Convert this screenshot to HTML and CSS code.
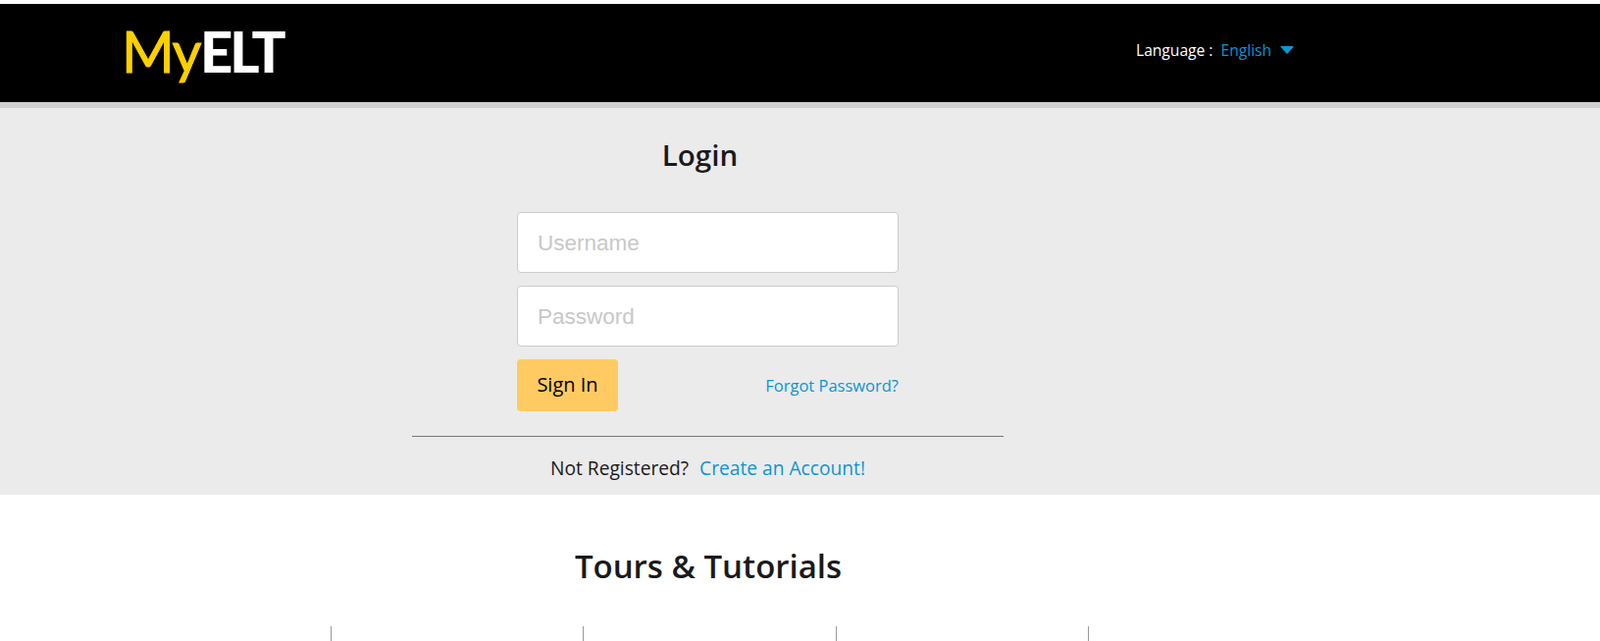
FILE: index.html
```html
<!DOCTYPE html>
<html>
    <head>
        <meta http-equiv="Content-Type" content="text/html; charset=utf-8" />
        <title>MyELT Login</title>
        <link rel="stylesheet" href="styles.css">
    </head>
    <body>
        <div class="header">
            <div class="logo"><span class="logo-my">My</span><span class="logo-elt">ELT</span></div>
            <div class="language">
                <span class="language-label">Language :</span>
                <a class="link" href="#">English</a>
                <svg class="caret" width="14" height="8" viewBox="0 0 14 8"><path d="M1 0H13Q14.2 0 13.4 1L7.6 7.4Q7 8 6.4 7.4L.6 1Q-.2 0 1 0Z" fill="#0b96d0"/></svg>
            </div>
        </div>
        <div class="login">
            <div class="login-box">
                <h1 class="login-title">Login</h1>
                <form class="login-form">
                    <input class="field" type="text" placeholder="Username">
                    <input class="field" type="text" placeholder="Password">
                    <div class="actions">
                        <button class="commit" type="button">Sign In</button>
                        <a class="link" href="#">Forgot Password?</a>
                    </div>
                </form>
                <div class="register">Not Registered? <a class="link" href="#">Create an Account!</a></div>
            </div>
        </div>
        <div class="tours">
            <h2 class="tours-title">Tours &amp; Tutorials</h2>
            <div class="ticks">
                <div class="tick"></div>
                <div class="tick"></div>
                <div class="tick"></div>
                <div class="tick"></div>
            </div>
        </div>
    </body>
</html>
```
FILE: styles.css
```css
html, body {
    height: 653px;
    overflow: hidden;
}

body {
    margin: 0;
    padding-top: 4px;
    box-sizing: border-box;
    background-color: #fff;
    color: #1a1a1a;
    font-family: "Open Sans", "Noto Sans", sans-serif;
}

.link {
    color: #0b96d0;
    text-decoration: none;
}

.header {
    display: flex;
    height: 100px;
    padding-left: 124px;
    background-color: #000;
    border-bottom: 6px solid #cfcfcf;
}

.logo {
    width: 1034px;
    height: 100px;
    font-family: "Lato", sans-serif;
    font-size: 58px;
    letter-spacing: -1.6px;
    line-height: 96px;
}

.logo-my {
    color: #fdd000;
    -webkit-text-stroke: 1px #fdd000;
}

.logo-elt {
    color: #fff;
    font-weight: 900;
    letter-spacing: -3px;
}

.language {
    margin-top: 37px;
    font-size: 15.6px;
    line-height: 20px;
    color: #fff;
}

.language-label {
    margin-right: 4px;
}

.caret {
    margin-left: 5px;
    vertical-align: 2px;
}

.login {
    height: 394px;
    padding-left: 420px;
    background-color: #ebebeb;
}

.login-box {
    width: 603px;
}

.login-title {
    margin: 0;
    padding: 28px 16px 0 0;
    font-size: 29.5px;
    font-weight: 600;
    line-height: 40px;
    text-align: center;
}

.login-form {
    display: flex;
    flex-direction: column;
    gap: 13px;
    width: 389px;
    margin: 38px 0 0 107px;
}

.field {
    box-sizing: border-box;
    height: 62px;
    padding: 2px 20px 0;
    background-color: #fff;
    border: 1px solid #cccccc;
    border-radius: 4px;
    font-family: "Liberation Sans", sans-serif;
    font-size: 22.5px;
}

.field::placeholder {
    color: #c8c8c8;
    opacity: 1;
}

.actions {
    display: flex;
    justify-content: space-between;
    align-items: center;
    font-size: 16.5px;
}

.commit {
    width: 103px;
    height: 53px;
    padding: 0 0 2px;
    background-color: #ffca62;
    border: 0;
    border-radius: 4px;
    color: #000;
    font-family: "Open Sans", "Noto Sans", sans-serif;
    font-size: 20px;
}

.register {
    margin-top: 25px;
    padding-top: 19px;
    border-top: 1px solid #777;
    font-size: 19.2px;
    line-height: 25px;
    text-align: center;
}

.register .link {
    margin-left: 6px;
}

.tours-title {
    margin: 0;
    padding: 50px 187px 0 0;
    font-size: 33px;
    font-weight: 600;
    line-height: 46px;
    text-align: center;
}

.ticks {
    display: flex;
    gap: 256.4px;
    margin: 38px 0 0 337px;
}

.tick {
    width: 1px;
    height: 15px;
    background-color: #999;
}
```
